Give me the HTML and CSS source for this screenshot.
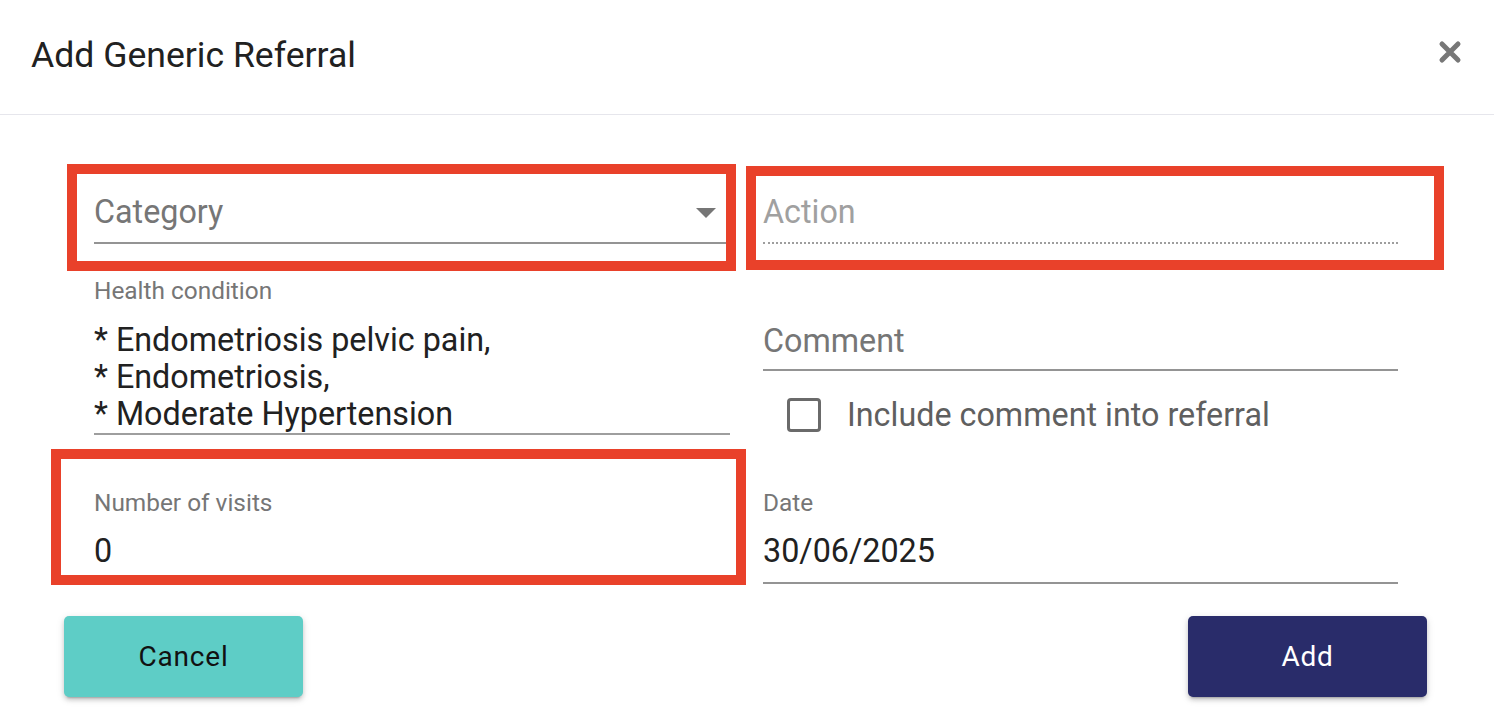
FILE: index.html
```html
<!DOCTYPE html>
<html lang="en">
<head>
<meta charset="utf-8">
<title>Add Generic Referral</title>
<link rel="stylesheet" href="styles.css">
</head>
<body>
<div class="dialog">
  <header class="dialog-header">
    <h1 class="dialog-title">Add Generic Referral</h1>
    <button class="close-btn" aria-label="Close">
      <svg viewBox="0 0 24 24" width="24" height="24"><path d="M4 4 L20 20 M20 4 L4 20" stroke="#777777" stroke-width="5" stroke-linecap="round"/></svg>
    </button>
  </header>

  <div class="dialog-body">
    <div class="form-grid">
      <div class="field field-select">
        <div class="input-line placeholder">Category</div>
        <span class="select-arrow"></span>
      </div>
      <div class="field field-dotted">
        <div class="input-line disabled">Action</div>
      </div>

      <div class="health">
        <div class="label">Health condition</div>
        <div class="health-list">
          <div>* Endometriosis pelvic pain,</div>
          <div>* Endometriosis,</div>
          <div>* Moderate Hypertension</div>
        </div>
      </div>
      <div class="comment-group">
        <div class="field field-comment">
          <div class="input-line placeholder">Comment</div>
        </div>
        <label class="check-row">
          <span class="checkbox"></span>
          <span class="check-label">Include comment into referral</span>
        </label>
      </div>

      <div class="labelled">
        <div class="label">Number of visits</div>
        <div class="field">
          <div class="input-line value">0</div>
        </div>
      </div>
      <div class="labelled">
        <div class="label">Date</div>
        <div class="field">
          <div class="input-line value">30/06/2025</div>
        </div>
      </div>
    </div>

    <div class="actions">
      <button class="btn btn-cancel">Cancel</button>
      <button class="btn btn-add">Add</button>
    </div>
  </div>

  <div class="highlight hl-category"></div>
  <div class="highlight hl-action"></div>
  <div class="highlight hl-visits"></div>
</div>
</body>
</html>
```

FILE: styles.css
```css
* { box-sizing: border-box; }
html, body { margin: 0; padding: 0; background: #ffffff; }
body {
  font-family: Roboto, "Liberation Sans", Arial, sans-serif;
  color: #212121;
  width: 1494px;
  height: 724px;
  overflow: hidden;
}
.dialog { position: relative; width: 1494px; height: 724px; }

.dialog-header {
  height: 115px;
  border-bottom: 1px solid #e6e6ec;
  padding: 34px 32px 0 31px;
  display: flex;
  align-items: flex-start;
  justify-content: space-between;
}
.dialog-title {
  margin: 0;
  font-size: 35.6px;
  line-height: 42px;
  font-weight: 400;
  color: #212121;
}
.close-btn {
  border: 0;
  background: none;
  padding: 0;
  margin-top: 6px;
  width: 24px;
  height: 24px;
  cursor: pointer;
}
.close-btn svg { display: block; }

.dialog-body { padding: 78px 96px 0 94px; }
.form-grid {
  display: grid;
  grid-template-columns: 636px 635px;
  column-gap: 33px;
  align-items: start;
}

.field {
  position: relative;
  border-bottom: 2px solid #949494;
  padding-bottom: 11px;
}
.field-select { margin-right: 3px; }
.field-dotted { border-bottom: 2px dotted #9e9e9e; }
.input-line {
  font-size: 32.3px;
  line-height: 38px;
  height: 38px;
  white-space: nowrap;
}
.placeholder { color: #767676; }
.disabled { color: #a0a0a0; }
.value { color: #212121; }
.select-arrow {
  position: absolute;
  right: 11px;
  top: 15px;
  width: 0; height: 0;
  border-left: 10px solid transparent;
  border-right: 10px solid transparent;
  border-top: 10px solid #767676;
}

.label {
  font-size: 24.4px;
  line-height: 28px;
  color: #767676;
  white-space: nowrap;
}
.health { margin-top: 33px; }
.health-list {
  margin-top: 17px;
  font-size: 32.3px;
  line-height: 37px;
  color: #212121;
  padding-bottom: 0;
  border-bottom: 2px solid #9e9e9e;
}

.comment-group { padding-top: 78px; }
.field-comment { padding-bottom: 9px; }
.check-row {
  margin-top: 25px;
  padding-left: 24px;
  display: flex;
  align-items: center;
  gap: 26px;
  height: 38px;
}
.checkbox {
  width: 34px;
  height: 34px;
  border: 3.5px solid #6a6a6a;
  border-radius: 4px;
  flex: none;
}
.check-label {
  font-size: 32.3px;
  line-height: 38px;
  color: #5f5f5f;
  white-space: nowrap;
}

.labelled { margin-top: 54px; }
.labelled .field { margin-top: 15px; padding-bottom: 12px; }

.actions {
  margin: 32px -29px 0 -30px;
  display: flex;
  justify-content: space-between;
}
.btn {
  width: 239px;
  height: 81px;
  border: 0;
  border-radius: 5px;
  font-family: Roboto, "Liberation Sans", Arial, sans-serif;
  font-size: 28px;
  letter-spacing: 0.8px;
  font-weight: 400;
  box-shadow: 0 4px 2px -3px rgba(0,0,0,0.2), 0 3px 4px 0 rgba(0,0,0,0.14), 0 2px 8px 0 rgba(0,0,0,0.12);
  cursor: pointer;
}
.btn-cancel { background: #5ecdc6; color: #111111; }
.btn-add { background: #292c6a; color: #ffffff; }

.highlight {
  position: absolute;
  border: 10px solid #e9412a;
  pointer-events: none;
}
.hl-category { left: 67px; top: 164px; width: 669px; height: 107px; }
.hl-action { left: 746px; top: 166px; width: 698px; height: 104px; }
.hl-visits { left: 51px; top: 449px; width: 695px; height: 136px; }
```
